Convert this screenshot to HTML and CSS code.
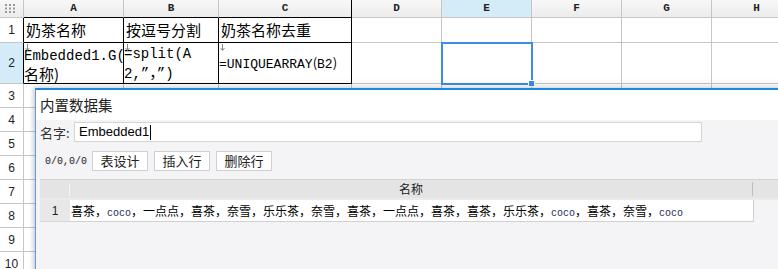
FILE: index.html
```html
<!DOCTYPE html>
<html lang="zh">
<head>
    <meta charset="UTF-8">
    <title>内置数据集</title>
    <link rel="stylesheet" href="styles.css">
</head>
<body>

<div class="sheet">
    <table class="grid">
        <tr class="col-head">
            <th class="corner w-idx">
                <svg width="10" height="9" viewBox="0 0 10 9">
                    <g fill="#9a9a9a">
                        <rect x="0" y="0" width="2" height="2"/><rect x="4" y="0" width="2" height="2"/><rect x="8" y="0" width="2" height="2"/>
                        <rect x="0" y="3.5" width="2" height="2"/><rect x="4" y="3.5" width="2" height="2"/><rect x="8" y="3.5" width="2" height="2"/>
                        <rect x="0" y="7" width="2" height="2"/><rect x="4" y="7" width="2" height="2"/><rect x="8" y="7" width="2" height="2"/>
                    </g>
                </svg>
            </th>
            <th class="w-a edge-b">A</th>
            <th class="w-b edge-b">B</th>
            <th class="w-c edge-b edge-r">C</th>
            <th class="w-n">D</th>
            <th class="w-n active">E</th>
            <th class="w-n">F</th>
            <th class="w-n">G</th>
            <th class="w-n">H</th>
        </tr>
        <tr class="r1">
            <th class="row-head edge-r">1</th>
            <td class="box">奶茶名称</td>
            <td class="box">按逗号分割</td>
            <td class="box">奶茶名称去重</td>
            <td></td><td></td><td></td><td></td><td></td>
        </tr>
        <tr class="r2">
            <th class="row-head edge-r active">2</th>
            <td class="box formula"><svg class="mark" width="5" height="7" viewBox="0 0 5 7"><path d="M2.5 0v6M0.5 4l2 2.5 2-2.5" fill="none" stroke="#8a8a8a" stroke-width="1"/></svg><span class="mono">Embedded1.G(</span><br>名称)</td>
            <td class="box formula"><svg class="mark" width="5" height="7" viewBox="0 0 5 7"><path d="M2.5 0v6M0.5 4l2 2.5 2-2.5" fill="none" stroke="#8a8a8a" stroke-width="1"/></svg><span class="mono">=split(A</span><br><span class="mono">2,”</span>，<span class="mono">”)</span></td>
            <td class="box formula small"><svg class="mark" width="5" height="7" viewBox="0 0 5 7"><path d="M2.5 0v6M0.5 4l2 2.5 2-2.5" fill="none" stroke="#8a8a8a" stroke-width="1"/></svg><span class="mono">=UNIQUEARRAY</span>(<span class="mono">B2</span>)</td>
            <td></td>
            <td class="selected"></td>
            <td></td><td></td><td></td>
        </tr>
        <tr class="rn"><th class="row-head">3</th><td></td><td></td><td></td><td></td><td></td><td></td><td></td><td></td></tr>
        <tr class="rn"><th class="row-head">4</th><td></td><td></td><td></td><td></td><td></td><td></td><td></td><td></td></tr>
        <tr class="rn"><th class="row-head">5</th><td></td><td></td><td></td><td></td><td></td><td></td><td></td><td></td></tr>
        <tr class="rn"><th class="row-head">6</th><td></td><td></td><td></td><td></td><td></td><td></td><td></td><td></td></tr>
        <tr class="rn"><th class="row-head">7</th><td></td><td></td><td></td><td></td><td></td><td></td><td></td><td></td></tr>
        <tr class="rn"><th class="row-head">8</th><td></td><td></td><td></td><td></td><td></td><td></td><td></td><td></td></tr>
        <tr class="rn"><th class="row-head">9</th><td></td><td></td><td></td><td></td><td></td><td></td><td></td><td></td></tr>
        <tr class="rn"><th class="row-head">10</th><td></td><td></td><td></td><td></td><td></td><td></td><td></td><td></td></tr>
    </table>
</div>

<div class="dialog">
    <div class="dialog-title">内置数据集</div>
    <div class="dialog-body">
        <div class="name-row">
            <label class="name-label">名字:</label>
            <div class="name-input">Embedded1<span class="caret"></span></div>
        </div>
        <div class="tools">
            <span class="pos">0/0,0/0</span>
            <button class="tool-btn">表设计</button>
            <button class="tool-btn">插入行</button>
            <button class="tool-btn">删除行</button>
        </div>
        <div class="data">
            <div class="data-head">
                <div class="num"><span class="sep"></span></div>
                <div class="field">名称</div>
                <div class="rest"></div>
            </div>
            <div class="data-row">
                <div class="num">1</div>
                <div class="field">喜茶，<span class="latin">coco</span>，一点点，喜茶，奈雪，乐乐茶，奈雪，喜茶，一点点，喜茶，喜茶，乐乐茶，<span class="latin">coco</span>，喜茶，奈雪，<span class="latin">coco</span></div>
            </div>
        </div>
    </div>
</div>

</body>
</html>
```

FILE: styles.css
```css
body {
    margin: 0;
    width: 778px;
    height: 269px;
    overflow: hidden;
    position: relative;
    background: #ffffff;
    font-family: "Noto Sans CJK SC", "Liberation Sans", sans-serif;
    color: #111;
}
.sheet {
    width: 778px;
    overflow: hidden;
}
.grid {
    border-collapse: separate;
    border-spacing: 0;
    table-layout: fixed;
    width: 802px;
}
.grid th, .grid td {
    box-sizing: border-box;
    padding: 0;
    border-right: 1px solid #c6c6c6;
    border-bottom: 1px solid #c6c6c6;
    vertical-align: middle;
    overflow: hidden;
    white-space: nowrap;
}
.w-idx { width: 24px; }
.w-a { width: 100px; }
.w-b { width: 95px; }
.w-c { width: 133px; }
.w-n { width: 90px; }

.col-head { height: 18px; }
.col-head th {
    background: linear-gradient(#f8f8f8, #ececec);
    font-family: "Liberation Mono", monospace;
    font-size: 11px;
    font-weight: bold;
    color: #222;
    line-height: 17px;
}
.col-head th.active {
    background: #d3ecf8;
}
.corner svg {
    display: block;
    margin: 0 0 0 5px;
}
.r1 { height: 25px; }
.r2 { height: 35px; }
.rn { height: 24px; }

.row-head {
    font-family: "Liberation Sans", sans-serif;
    font-size: 12px;
    font-weight: normal;
    color: #222;
    background: #ffffff;
}
.row-head.active {
    background: #d3ecf8;
}
.edge-b {
    border-bottom-color: #000 !important;
}
.edge-r {
    border-right-color: #000 !important;
}
.grid td.box {
    border-right-color: #000;
    border-bottom-color: #000;
    font-size: 15px;
    padding-left: 2px;
    line-height: 18px;
    color: #000;
}
.grid td.formula {
    position: relative;
    white-space: nowrap;
    padding-left: 0;
    line-height: 17px;
}
.mono {
    font-family: "Liberation Mono", monospace;
    font-size: 14px;
}
.grid td.small {
    font-size: 13px;
}
.small .mono {
    font-size: 13px;
}
.mark {
    position: absolute;
    left: 1px;
    top: 1px;
}
.grid td.selected {
    position: relative;
    outline: 2px solid #3a8ee6;
    outline-offset: -1px;
    overflow: visible;
}
.grid td.selected::after {
    content: "";
    position: absolute;
    right: -4px;
    bottom: -4px;
    width: 5px;
    height: 5px;
    background: #3a8ee6;
    border: 1px solid #fff;
}

/* dialog */
.dialog {
    position: absolute;
    left: 35px;
    top: 88px;
    right: -10px;
    bottom: -10px;
    border-top: 2px solid #1b87e0;
    border-left: 1px solid #5a9ee0;
    background: #f4f4f6;
    box-shadow: 0 -4px 8px rgba(0, 0, 0, 0.08), -2px 0 4px rgba(0, 0, 0, 0.15);
}
.dialog-title {
    height: 30px;
    line-height: 29px;
    background: #ffffff;
    padding-left: 4px;
    font-size: 14.5px;
    color: #222;
}
.dialog-body {
    padding: 2px 0 0 4px;
}
.name-row {
    display: flex;
    align-items: center;
    height: 20px;
}
.name-label {
    width: 34px;
    font-size: 13px;
    color: #333;
}
.name-input {
    box-sizing: border-box;
    width: 628px;
    height: 20px;
    border: 1px solid #d4d4d4;
    background: #fff;
    padding-left: 4px;
    font-family: "Liberation Sans", sans-serif;
    font-size: 13px;
    line-height: 18px;
    color: #000;
    display: flex;
    align-items: center;
}
.caret {
    display: inline-block;
    width: 1px;
    height: 15px;
    background: #000;
    margin-left: 1px;
}
.tools {
    display: flex;
    align-items: center;
    margin-top: 9px;
    height: 20px;
}
.pos {
    font-family: "Liberation Mono", monospace;
    font-size: 10px;
    color: #222;
    padding-left: 5px;
    margin-right: 5px;
}
.tool-btn {
    box-sizing: border-box;
    width: 56px;
    height: 20px;
    margin-right: 6px;
    padding: 0;
    border: 1px solid #d0d0d0;
    background: #fff;
    font-family: "Noto Sans CJK SC", sans-serif;
    font-size: 13px;
    line-height: 18px;
    color: #222;
}
.data {
    margin-top: 8px;
    border-top: 1px solid #d2d2d2;
}
.data-head {
    display: flex;
    height: 18px;
    background: #e4e4e4;
    border-bottom: 2px solid #ececec;
}
.data-head .num {
    width: 30px;
    position: relative;
}
.sep {
    position: absolute;
    right: 0;
    top: 3px;
    width: 1px;
    height: 13px;
    background: #f6f6f6;
}
.data-head .field {
    width: 682px;
    border-right: 1px solid #bdbdbd;
    text-align: center;
    font-size: 12px;
    color: #222;
    margin: 2px 0;
    line-height: 14px;
}
.data-head .rest {
    flex: 1;
}
.data-row {
    display: flex;
    height: 22px;
}
.data-row .num {
    width: 30px;
    background: #e8e8e8;
    text-align: center;
    font-family: "Liberation Sans", sans-serif;
    font-size: 12px;
    line-height: 22px;
    color: #222;
    border-bottom: 1px solid #d8d8d8;
}
.data-row .field {
    width: 682px;
    background: #fff;
    border-right: 1px solid #d0d0d0;
    border-bottom: 1px solid #d0d0d0;
    padding-left: 1px;
    font-size: 12px;
    line-height: 21px;
    color: #000;
    white-space: nowrap;
    overflow: hidden;
}
.latin {
    font-family: "Liberation Mono", monospace;
    font-size: 10px;
    color: #1d2a5a;
}
```
